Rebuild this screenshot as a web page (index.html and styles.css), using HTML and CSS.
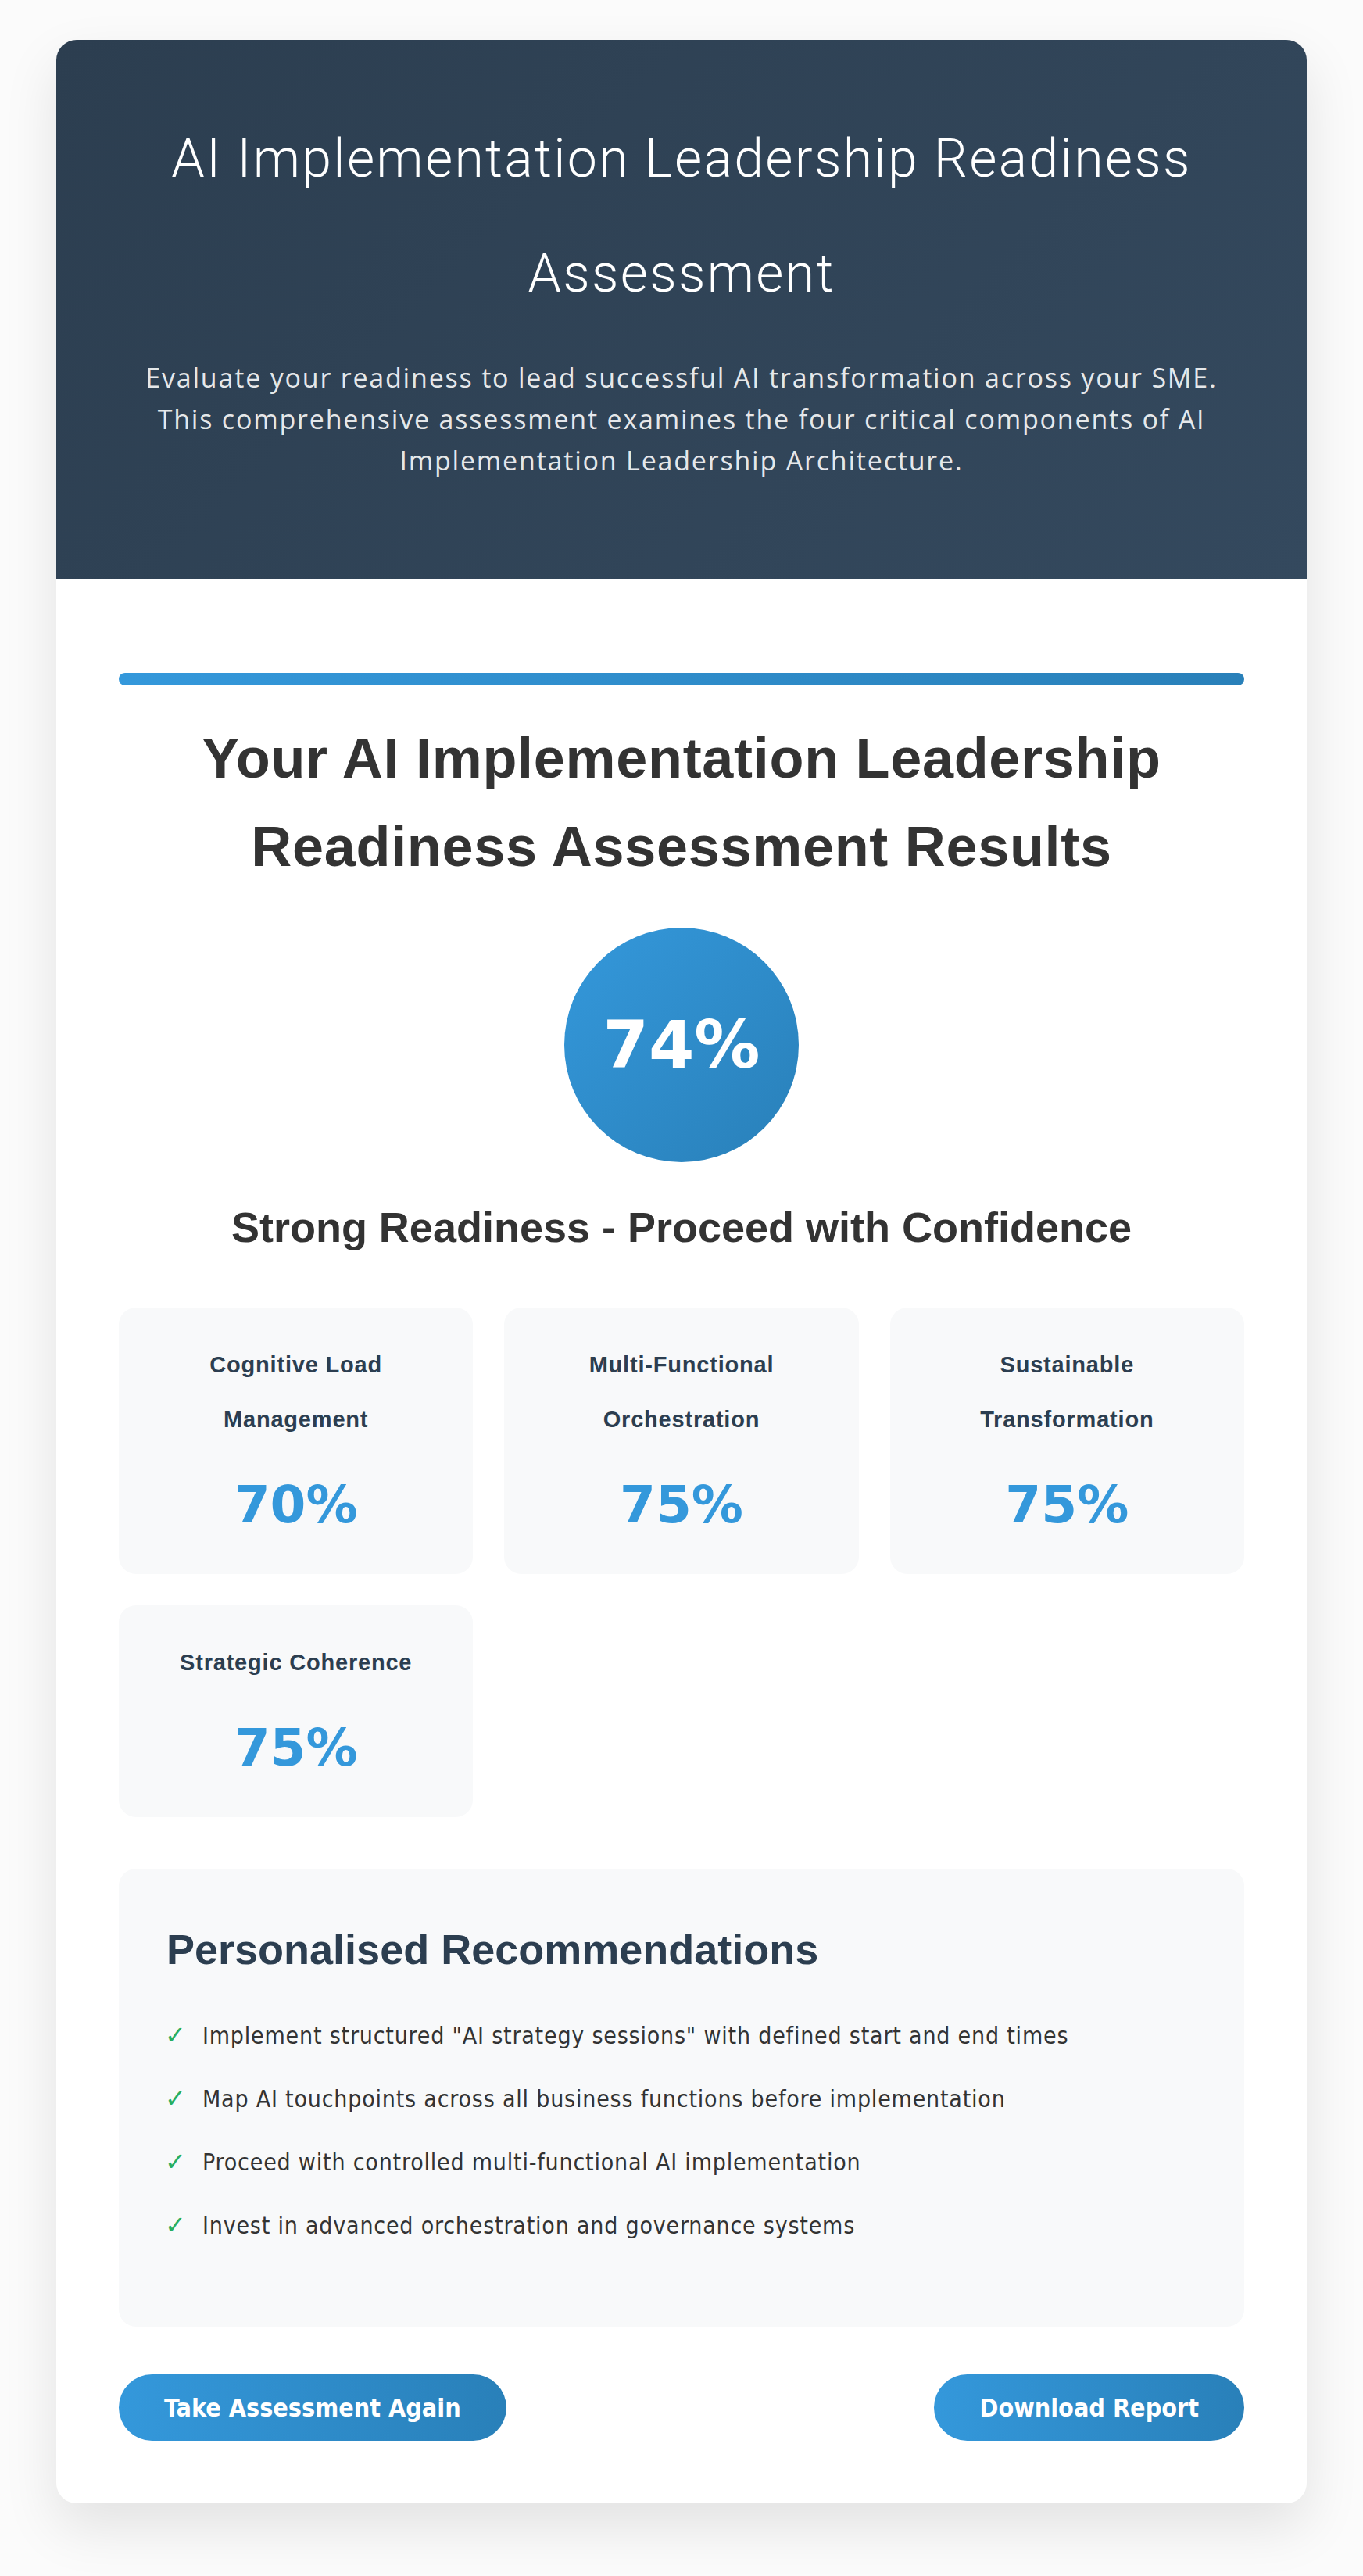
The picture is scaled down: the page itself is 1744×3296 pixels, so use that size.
FILE: index.html
```html
<!DOCTYPE html>
<html lang="en">
<head>
<meta charset="utf-8">
<title>AI Implementation Leadership Readiness Assessment</title>
<link rel="stylesheet" href="styles.css">
</head>
<body>
<div class="container">
  <header class="header">
    <h1 class="header-title">AI Implementation Leadership Readiness Assessment</h1>
    <p class="header-sub">Evaluate your readiness to lead successful AI transformation across your SME. This comprehensive assessment examines the four critical components of AI Implementation Leadership Architecture.</p>
  </header>
  <main class="content">
    <div class="progress-bar"></div>
    <h2 class="results-title">Your AI Implementation Leadership Readiness Assessment Results</h2>
    <div class="score-circle"><span class="score-value">74%</span></div>
    <h3 class="readiness-label">Strong Readiness - Proceed with Confidence</h3>
    <div class="categories">
      <div class="category">
        <h4 class="category-name">Cognitive Load Management</h4>
        <div class="category-score">70%</div>
      </div>
      <div class="category">
        <h4 class="category-name">Multi-Functional Orchestration</h4>
        <div class="category-score">75%</div>
      </div>
      <div class="category">
        <h4 class="category-name">Sustainable Transformation</h4>
        <div class="category-score">75%</div>
      </div>
      <div class="category">
        <h4 class="category-name">Strategic Coherence</h4>
        <div class="category-score">75%</div>
      </div>
    </div>
    <section class="recommendations">
      <h3 class="rec-title">Personalised Recommendations</h3>
      <ul class="rec-list">
        <li><span class="check">✓</span>Implement structured "AI strategy sessions" with defined start and end times</li>
        <li><span class="check">✓</span>Map AI touchpoints across all business functions before implementation</li>
        <li><span class="check">✓</span>Proceed with controlled multi-functional AI implementation</li>
        <li><span class="check">✓</span>Invest in advanced orchestration and governance systems</li>
      </ul>
    </section>
    <div class="actions">
      <button class="btn">Take Assessment Again</button>
      <button class="btn">Download Report</button>
    </div>
  </main>
</div>
</body>
</html>
```

FILE: styles.css
```css
* { box-sizing: border-box; }

html, body {
  margin: 0;
  padding: 0;
}

body {
  background: #fbfbfb;
  padding: 51px 0 93px;
  font-family: "Liberation Sans", Arial, sans-serif;
  color: #333;
}

.container {
  width: 1600px;
  margin: 0 auto;
  background: #fff;
  border-radius: 26px;
  overflow: hidden;
  box-shadow: 0 30px 70px rgba(0, 0, 0, 0.10);
}

.header {
  background: linear-gradient(135deg, #2c3e50 0%, #34495e 100%);
  padding: 79px 100px 125px;
  text-align: center;
  color: #fff;
}

.header-title {
  margin: 0 0 33px;
  font-family: "Roboto", "Liberation Sans", sans-serif;
  font-weight: 300;
  font-size: 68px;
  line-height: 147px;
  letter-spacing: 2.3px;
}

.header-sub {
  margin: 0 auto;
  max-width: 1400px;
  font-family: "Open Sans", "Noto Sans", sans-serif;
  font-size: 34px;
  line-height: 53px;
  letter-spacing: 1.8px;
  color: rgba(255, 255, 255, 0.9);
}

.content {
  padding: 120px 80px 80px;
}

.progress-bar {
  height: 16px;
  border-radius: 8px;
  background: linear-gradient(90deg, #3498db 0%, #2980b9 100%);
}

.results-title {
  margin: 37px 0 0;
  text-align: center;
  font-size: 72px;
  line-height: 113px;
  font-weight: 700;
  letter-spacing: 0.7px;
  color: #333;
}

.score-circle {
  width: 300px;
  height: 300px;
  margin: 47px auto 0;
  border-radius: 50%;
  background: linear-gradient(135deg, #3498db 0%, #2980b9 100%);
  display: flex;
  align-items: center;
  justify-content: center;
}

.score-value {
  font-family: "DejaVu Sans", Verdana, sans-serif;
  font-weight: 700;
  font-size: 84px;
  color: #fff;
}

.readiness-label {
  margin: 52px 0 0;
  text-align: center;
  font-size: 54px;
  line-height: 62px;
  font-weight: 700;
  color: #333;
}

.categories {
  margin-top: 72px;
  display: grid;
  grid-template-columns: repeat(3, 1fr);
  gap: 40px;
}

.category {
  background: #f8f9fa;
  border-radius: 22px;
  padding: 38px 50px 40px;
  text-align: center;
}

.category-name {
  margin: 0 0 36px;
  font-size: 29px;
  line-height: 70px;
  font-weight: 700;
  letter-spacing: 0.8px;
  color: #2c3e50;
}

.category-score {
  font-family: "DejaVu Sans", Verdana, sans-serif;
  font-weight: 700;
  font-size: 66px;
  color: #3498db;
  margin-bottom: 10px;
}

.recommendations {
  margin-top: 66px;
  background: #f8f9fa;
  border-radius: 22px;
  padding: 60px 60px 60px 61px;
}

.rec-title {
  margin: 12px 0 39px;
  font-size: 54px;
  line-height: 62px;
  font-weight: 700;
  color: #2c3e50;
}

.rec-list {
  list-style: none;
  margin: 0 0 29px;
  padding: 0;
}

.rec-list li {
  font-family: "DejaVu Sans Condensed", "DejaVu Sans", sans-serif;
  font-stretch: condensed;
  font-size: 30px;
  line-height: 51px;
  letter-spacing: 0.8px;
  padding: 15px 0;
  color: #333;
}

.check {
  display: inline-block;
  width: 48px;
  margin-left: -2px;
  font-family: "DejaVu Sans", sans-serif;
  font-stretch: normal;
  font-size: 32px;
  line-height: 1;
  font-weight: 700;
  letter-spacing: 0;
  color: #27ae60;
}

.actions {
  margin-top: 61px;
  display: flex;
  justify-content: space-between;
}

.btn {
  border: none;
  border-radius: 43px;
  height: 85px;
  padding: 0 58px;
  background: linear-gradient(90deg, #3498db 0%, #2980b9 100%);
  color: #fff;
  font-family: "DejaVu Sans Condensed", "DejaVu Sans", sans-serif;
  font-stretch: condensed;
  font-weight: 700;
  font-size: 32px;
  cursor: pointer;
}
```
